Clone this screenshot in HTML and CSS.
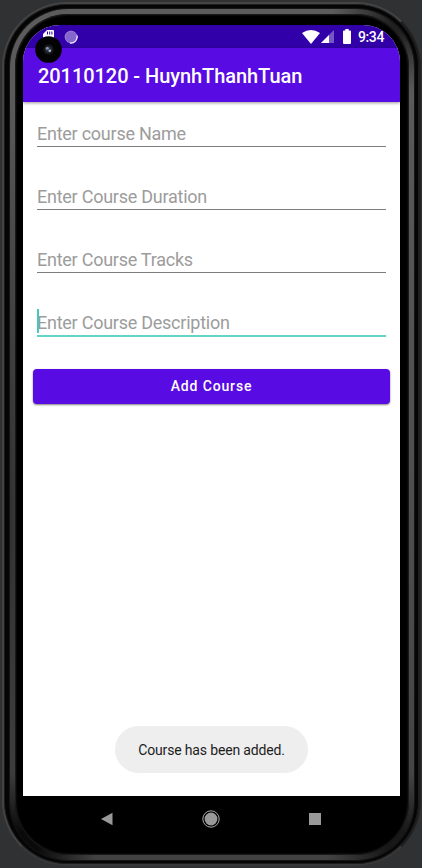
FILE: index.html
```html
<!DOCTYPE html>
<html lang="en">
<head>
<meta charset="utf-8">
<title>20110120 - HuynhThanhTuan</title>
<link rel="stylesheet" href="styles.css">
</head>
<body>
<div class="phone">
  <div class="ring">
    <main class="screen">
      <header class="status">
        <svg class="sd" viewBox="0 0 11 12" width="11" height="12"><path fill="#fff" d="M4 0h6q1 0 1 1v11H0V4z"/><path stroke="#3200a8" stroke-width="1" d="M4.500 1.500v3M6.700 1.500v3M8.900 1.500v3"/></svg>
        <svg class="sync" viewBox="0 0 14 14" width="14" height="14"><circle cx="7" cy="7" r="6.200" fill="#8566cd"/><circle cx="7" cy="7" r="5.800" fill="none" stroke="#a690dc" stroke-dasharray="1.200 .8"/><path d="M13 5.500A6.200 6.200 0 0 1 6 13" fill="none" stroke="#eee9fa" stroke-width="1.300"/></svg>
        <svg class="wifi" viewBox="0 0 18 14" width="18" height="14"><path fill="#fff" d="M0 3Q9-3 18 3L9 14z"/></svg>
        <svg class="cell" viewBox="0 0 13 13" width="13" height="13"><path fill="#7657c6" d="M13 0v13H0z"/><path fill="#fff" d="M8 5v8H0z"/></svg>
        <svg class="battery" viewBox="0 0 8 15" width="8" height="15"><path fill="#fff" d="M2.300 0h3.400v1.500H7q1 0 1 1V14q0 1-1 1H1q-1 0-1-1V2.500q0-1 1-1h1.300z"/></svg>
        <span class="clock">9:34</span>
      </header>
      <svg class="camera" viewBox="0 0 27 27" width="27" height="27"><circle cx="13.500" cy="13.500" r="13.300" fill="#030304"/><circle cx="13.500" cy="13.500" r="5.200" fill="#15161b"/><circle cx="13.500" cy="13.500" r="3.300" fill="#29303f"/><circle cx="12.300" cy="12.300" r="1.500" fill="#8791a8"/><circle cx="14.800" cy="14.800" r="1.300" fill="#aeb9d0"/></svg>
      <h1 class="title">20110120 - HuynhThanhTuan</h1>
      <form class="form">
        <div class="field"><span class="hint">Enter course Name</span></div>
        <div class="field"><span class="hint">Enter Course Duration</span></div>
        <div class="field"><span class="hint">Enter Course Tracks</span></div>
        <div class="field focused"><span class="hint">Enter Course Description</span></div>
        <button class="add" type="button">Add Course</button>
      </form>
      <div class="toast">Course has been added.</div>
    </main>
    <nav class="nav">
      <svg viewBox="0 0 12 14" width="12" height="14"><path fill="#999" d="M11.500.700v12.600L0 7z"/></svg>
      <svg viewBox="0 0 18 18" width="18" height="18"><circle cx="9" cy="9" r="8.200" fill="none" stroke="#aaa"/><circle cx="9" cy="9" r="6.400" fill="#999"/></svg>
      <svg viewBox="0 0 12 12" width="12" height="12"><path fill="#999" d="M0 0h12v12H0z"/></svg>
    </nav>
  </div>
</div>
</body>
</html>
```
FILE: styles.css
```css
* { box-sizing: border-box; }
body {
  margin: 0;
  height: 868px;
  padding: 2px 1px 2px 2px;
  overflow: hidden;
  background: #303133;
  font-family: Roboto, sans-serif;
}
svg { display: block; flex: none; }
.phone {
  width: 419px;
  height: 864px;
  padding: 5px 5px 4px 6px;
  border: 2px solid;
  border-color: #444 #202122 #383838 #444;
  border-radius: 65px;
  background: #050505;
  box-shadow: inset 0 0 0 1px #1c1c1c;
}
.ring {
  width: 404px;
  height: 851px;
  padding: 11px 9px 0 8px;
  border: 5px solid transparent;
  border-radius: 58px;
  background:
    linear-gradient(#000, #000) padding-box,
    radial-gradient(circle at 12px 838px, #0a0a0a 15px, transparent 75px) border-box,
    radial-gradient(circle at 392px 838px, #181818 15px, transparent 75px) border-box,
    radial-gradient(circle at 392px 12px, #202020 10px, transparent 70px) border-box,
    radial-gradient(ellipse 20px 420px at 0 60%, #303030, transparent) border-box,
    linear-gradient(#5c5c5c, #505050 50%, #424242) border-box;
  box-shadow: 0 0 1px 1px #181818, inset 0 0 2px 1px #222;
}
.screen {
  position: relative;
  display: flex;
  flex-direction: column;
  width: 377px;
  height: 771px;
  overflow: hidden;
  border-radius: 37px 37px 0 0;
  background: #fff;
}
.status {
  display: flex;
  flex: none;
  align-items: flex-start;
  height: 23px;
  padding: 5px 0 0 20px;
  background: #3200a8;
  color: #fff;
}
.sync { margin-left: 10px; }
.wifi { margin-left: 224px; }
.cell { margin-left: 1px; }
.battery { margin-left: 9px; margin-top: -1px; }
.clock { margin-left: 7px; font-size: 14px; line-height: 15px; font-weight: 500; letter-spacing: -.4px; white-space: nowrap; }
.camera { position: absolute; left: 12px; top: 11px; }
.title {
  flex: none;
  height: 54px;
  margin: 0;
  padding-left: 15px;
  background: #580be2;
  box-shadow: 0 1px 3px rgba(0, 0, 0, .4);
  color: #fff;
  font-size: 20px;
  font-weight: 500;
  line-height: 56px;
  letter-spacing: -.06px;
  white-space: nowrap;
}
.form { display: flex; flex-direction: column; padding: 9px 10px 0; }
.field {
  height: 36px;
  margin: 0 4px 27px;
  border-bottom: 1px solid #7d7d7d;
  color: #9c9c9c;
  font-size: 18px;
  line-height: 46px;
  letter-spacing: -.25px;
  white-space: nowrap;
}
.focused {
  position: relative;
  height: 37px;
  border-bottom: 2px solid #62d5c7;
}
.focused::before {
  content: "";
  position: absolute;
  left: 0;
  top: 9px;
  width: 2px;
  height: 24px;
  background: #45c9b8;
}
.add {
  height: 35px;
  margin-top: 5px;
  padding: 0;
  border: 0;
  border-radius: 4px;
  background: #580be2;
  box-shadow: 0 1px 2px rgba(0, 0, 0, .5);
  color: #fff;
  font: 500 14px/35px Roboto, sans-serif;
  letter-spacing: .850px;
}
.toast {
  align-self: center;
  width: 193px;
  height: 47px;
  margin: auto 0 23px;
  border-radius: 23.500px;
  background: #eee;
  color: #1d1d1d;
  font-size: 14px;
  line-height: 48px;
  letter-spacing: -.16px;
  text-align: center;
  white-space: nowrap;
}
.nav {
  display: flex;
  align-items: center;
  justify-content: space-between;
  width: 377px;
  height: 46px;
  padding: 0 79px 0 78px;
}
```
